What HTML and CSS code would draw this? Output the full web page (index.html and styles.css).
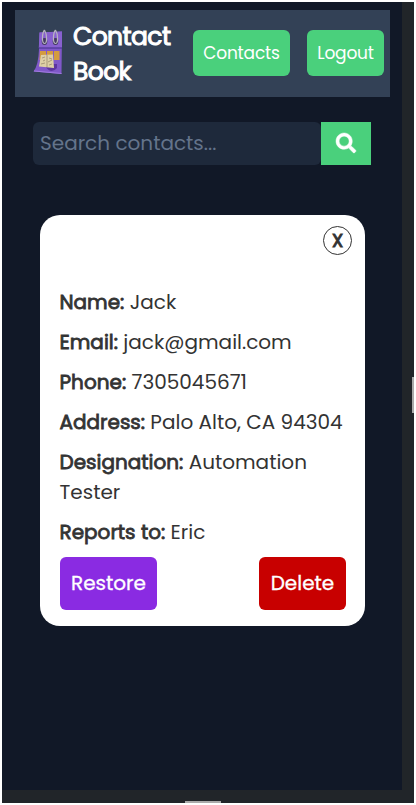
FILE: index.html
```html
<!DOCTYPE html>
<html lang="en">
<head>
<meta charset="utf-8">
<title>Contact Book</title>
<link rel="stylesheet" href="styles.css">
</head>
<body>
<div class="device">
  <main class="screen">
    <header class="navbar">
      <svg class="logo" viewBox="0 0 30 48" aria-hidden="true">
        <path d="M6.500 4.500 29 3.500 28.500 46 0.500 43.500Q5.500 37 6 21Z" fill="#8058c9"/>
        <path d="M6.500 4.500 29 3.500V20H5.800Z" fill="#8861cf"/>
        <path d="M5.800 20H29" stroke="#51389a" stroke-width="1.300"/>
        <path d="M1 43 28.500 45.500" stroke="#a17be0" stroke-width="1"/>
        <path d="M12 38q6 9 12 2v-4H12Z" fill="#5d359f"/>
        <path d="M7 23h6v9H6.500ZM14 23h6v9h-6ZM21 23h5.500v9H21Z" fill="#d49c3e"/>
        <path d="M8 27 20 26.500 21 40 6 38.500Z" fill="#ded0a5"/>
        <path d="M14 27v12M9 30l3-1M10 33l2-1M8 36l4-1M16 30l3 1M15 34l4-2M16 37l3-1" stroke="#85735c" stroke-width=".6"/>
        <ellipse cx="11.500" cy="13.500" rx="2.800" ry="3.500" fill="#443b60"/>
        <ellipse cx="22.500" cy="13.500" rx="2.800" ry="3.500" fill="#443b60"/>
        <path d="M11.500 2C9 5 8.500 15 11.500 15.500S14 6 11.500 2M22.500 2C20 5 19.500 15 22.500 15.500S25 6 22.500 2" fill="none" stroke="#b8b5bf" stroke-width="1.200"/>
      </svg>
      <h1 class="brand">Contact Book</h1>
      <nav class="nav-links">
        <button class="nav-btn nav-contacts">Contacts</button>
        <button class="nav-btn nav-logout">Logout</button>
      </nav>
    </header>
    <form class="search">
      <input class="search-input" type="text" placeholder="Search contacts...">
      <button class="search-btn" type="button" aria-label="Search">
        <svg class="search-icon" viewBox="0 0 512 512"><path fill="#fff" stroke="#fff" stroke-width="12" d="M505 442.700 405.300 343c-4.500-4.500-10.600-7-17-7H372c27.600-35.300 44-79.700 44-128C416 93.100 322.900 0 208 0S0 93.100 0 208s93.100 208 208 208c48.300 0 92.700-16.400 128-44v16.300c0 6.400 2.500 12.500 7 17l99.700 99.700c9.400 9.400 24.600 9.400 33.900 0l28.300-28.300c9.400-9.400 9.400-24.600.1-34zM208 336c-70.700 0-128-57.200-128-128 0-70.700 57.200-128 128-128 70.700 0 128 57.200 128 128 0 70.700-57.200 128-128 128z"/></svg>
      </button>
    </form>
    <section class="card">
      <button class="close" aria-label="Close">X</button>
      <p class="field"><b>Name:</b> Jack</p>
      <p class="field"><b>Email:</b> jack@gmail.com</p>
      <p class="field"><b>Phone:</b> 7305045671</p>
      <p class="field"><b>Address:</b> Palo Alto, CA 94304</p>
      <p class="field"><b>Designation:</b> Automation Tester</p>
      <p class="field"><b>Reports to:</b> Eric</p>
      <div class="actions">
        <button class="action restore">Restore</button>
        <button class="action delete">Delete</button>
      </div>
    </section>
  </main>
  <span class="grip grip-right"></span>
  <span class="grip grip-bottom"></span>
</div>
</body>
</html>
```
FILE: styles.css
```css
* { box-sizing: border-box; }
body { margin: 0; background: #fff; font-family: Poppins, Inter, sans-serif; overflow: hidden; }
button { border: 0; padding: 0; font-family: inherit; color: #fff; }
.device { position: relative; width: 412px; height: 801px; margin: 2px; background: #212529; }
.screen { width: 400px; height: 788px; padding: 8px 12px 0 13px; background: #111827; }
.navbar { display: flex; align-items: center; width: 375px; height: 87px; padding: 0 6px 0 18px; background: #334156; }
.logo { width: 30px; height: 48px; flex: none; margin-bottom: 3px; }
.brand { width: 110px; margin: 0 0 0 10px; font-size: 25px; line-height: 35px; font-weight: 400; letter-spacing: -.6px; color: #fff; -webkit-text-stroke: 1px #fff; }
.nav-links { display: flex; gap: 17px; margin-left: auto; margin-bottom: 1px; }
.nav-btn { height: 46px; padding-bottom: 1px; border-radius: 6px; background: #4ad07c; font-size: 17px; letter-spacing: -.2px; }
.nav-contacts { width: 97px; }
.nav-logout { width: 77px; }
.search { display: flex; width: 338px; height: 43px; margin: 25px 0 0 18px; }
.search-input { width: 288px; height: 43px; padding: 0 7px 2px; border: 0; border-radius: 6px; background: #1e293b; font: 20px Poppins, Inter, sans-serif; color: #fff; }
.search-input::placeholder { color: #64748b; opacity: 1; }
.search-btn { width: 50px; height: 43px; background: #4ad07c; display: flex; align-items: center; justify-content: center; }
.search-icon { width: 20px; height: 20px; margin-bottom: 2px; overflow: visible; }
.card { width: 325px; height: 411px; margin: 50px 0 0 25px; padding: 11px 19px 0 20px; border-radius: 20px; background: #fff; }
.close { display: block; width: 29px; height: 29px; margin: 0 -6px 32px auto; border: 1px solid #333; border-radius: 50%; background: #fff; color: #333; font-size: 18px; font-weight: 400; line-height: 27px; -webkit-text-stroke: 1px #333; }
.field { margin: 0 0 10px -.5px; font-size: 20px; line-height: 30px; color: #333; }
.field b { font-weight: 400; -webkit-text-stroke: .8px #333; }
.actions { display: flex; justify-content: space-between; }
.action { height: 53px; padding-bottom: 1px; border-radius: 6px; font-size: 20px; font-weight: 400; -webkit-text-stroke: .3px #fff; }
.restore { width: 97px; background: #8a2be2; }
.delete { width: 87px; background: #c80000; }
.grip { position: absolute; background: #aaa; }
.grip-right { right: 0; top: 375px; width: 2px; height: 36px; }
.grip-bottom { left: 183px; bottom: 0; width: 36px; height: 2px; }
```
